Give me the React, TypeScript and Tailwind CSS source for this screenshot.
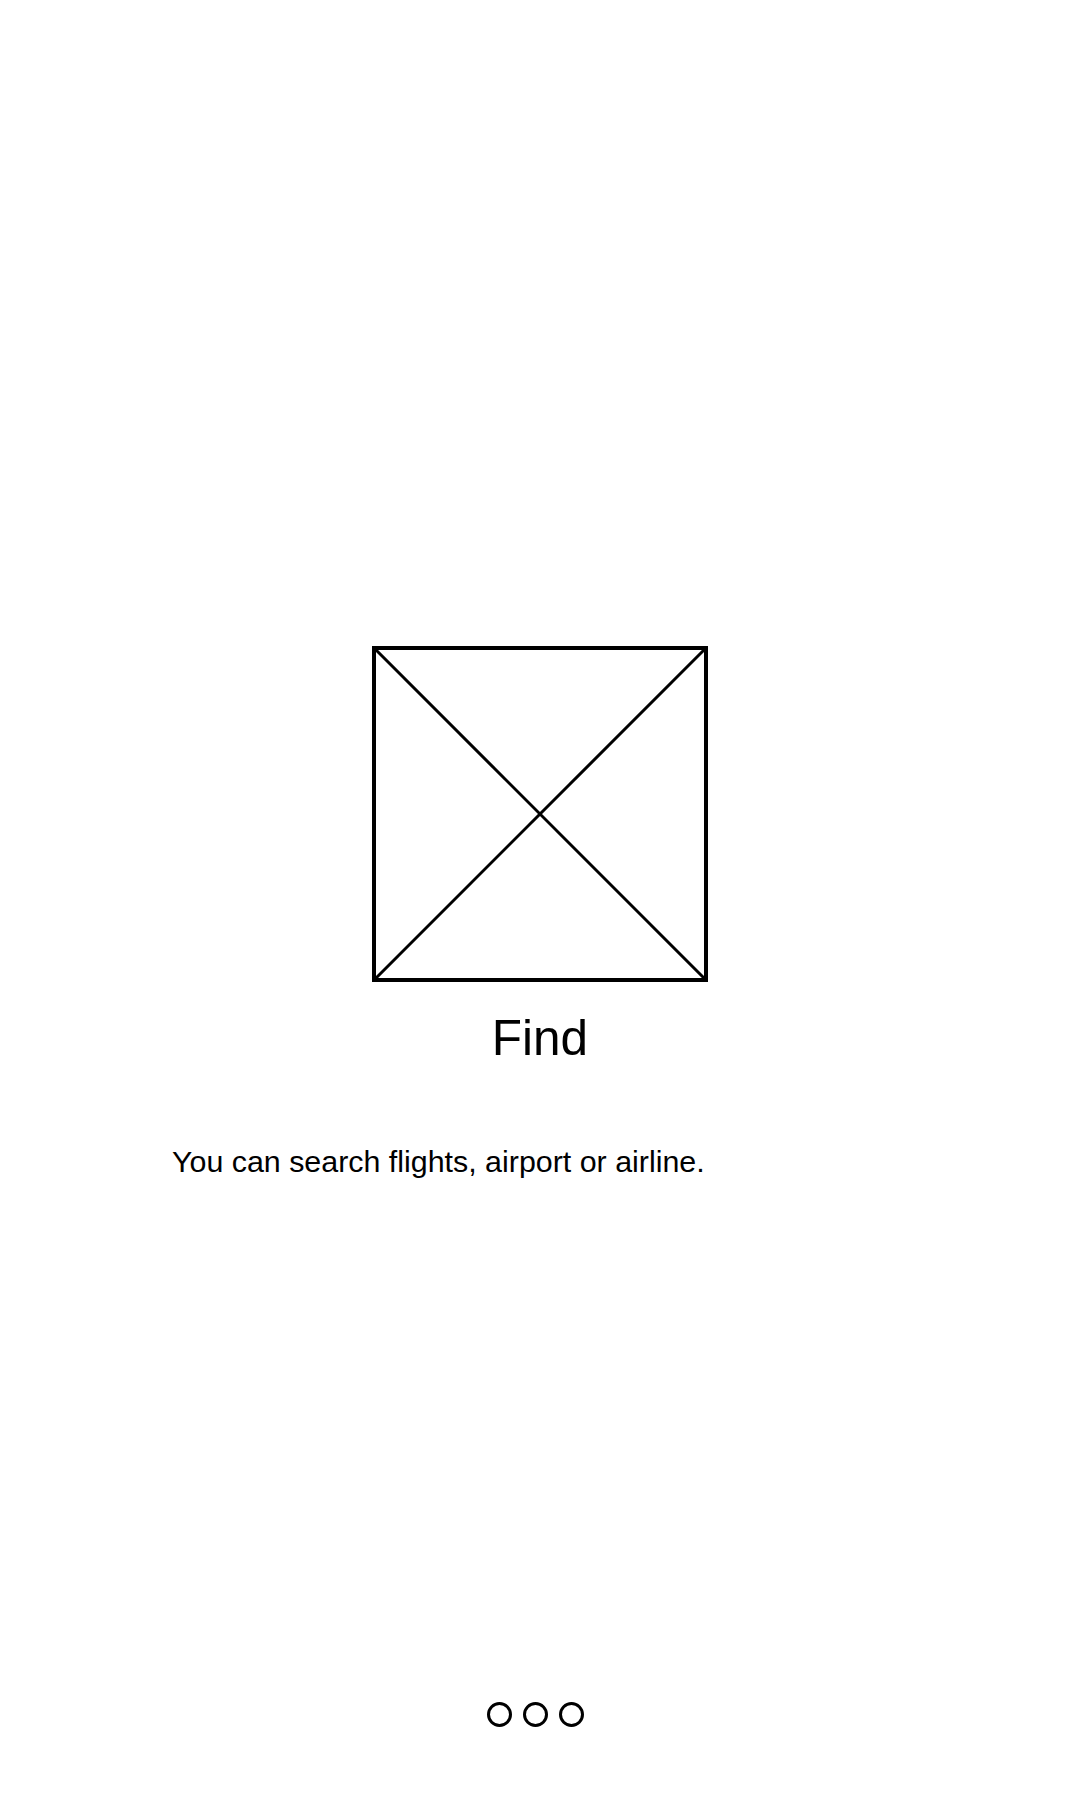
const Placeholder = () => {
  return (
    <div className="w-[336px] h-[336px] border-4 border-black">
      <svg className="block w-full h-full" viewBox="0 0 100 100" preserveAspectRatio="none">
        <line x1="0" y1="0" x2="100" y2="100" stroke="black" strokeWidth="3" vectorEffect="non-scaling-stroke" />
        <line x1="100" y1="0" x2="0" y2="100" stroke="black" strokeWidth="3" vectorEffect="non-scaling-stroke" />
      </svg>
    </div>
  );
};

const Dots = () => {
  return (
    <div className="flex items-center justify-center gap-[11px] pr-[9px]">
      <span className="w-[25px] h-[25px] rounded-full border-[3px] border-black" />
      <span className="w-[25px] h-[25px] rounded-full border-[3px] border-black" />
      <span className="w-[25px] h-[25px] rounded-full border-[3px] border-black" />
    </div>
  );
};

export default function App() {
  return (
    <div
      className="w-[1080px] h-[1800px] bg-white flex flex-col text-black"
      style={{ fontFamily: '"Liberation Sans", Arial, sans-serif' }}
    >
      <div className="flex flex-col items-center pt-[646px]">
        <Placeholder />
        <h1 className="mt-[31px] text-[49.5px] leading-none font-normal">Find</h1>
      </div>
      <p className="mt-[83px] px-[172px] text-[30.4px] leading-none">
        You can search flights, airport or airline.
      </p>
      <div className="mt-auto pb-[73px]">
        <Dots />
      </div>
    </div>
  );
}
